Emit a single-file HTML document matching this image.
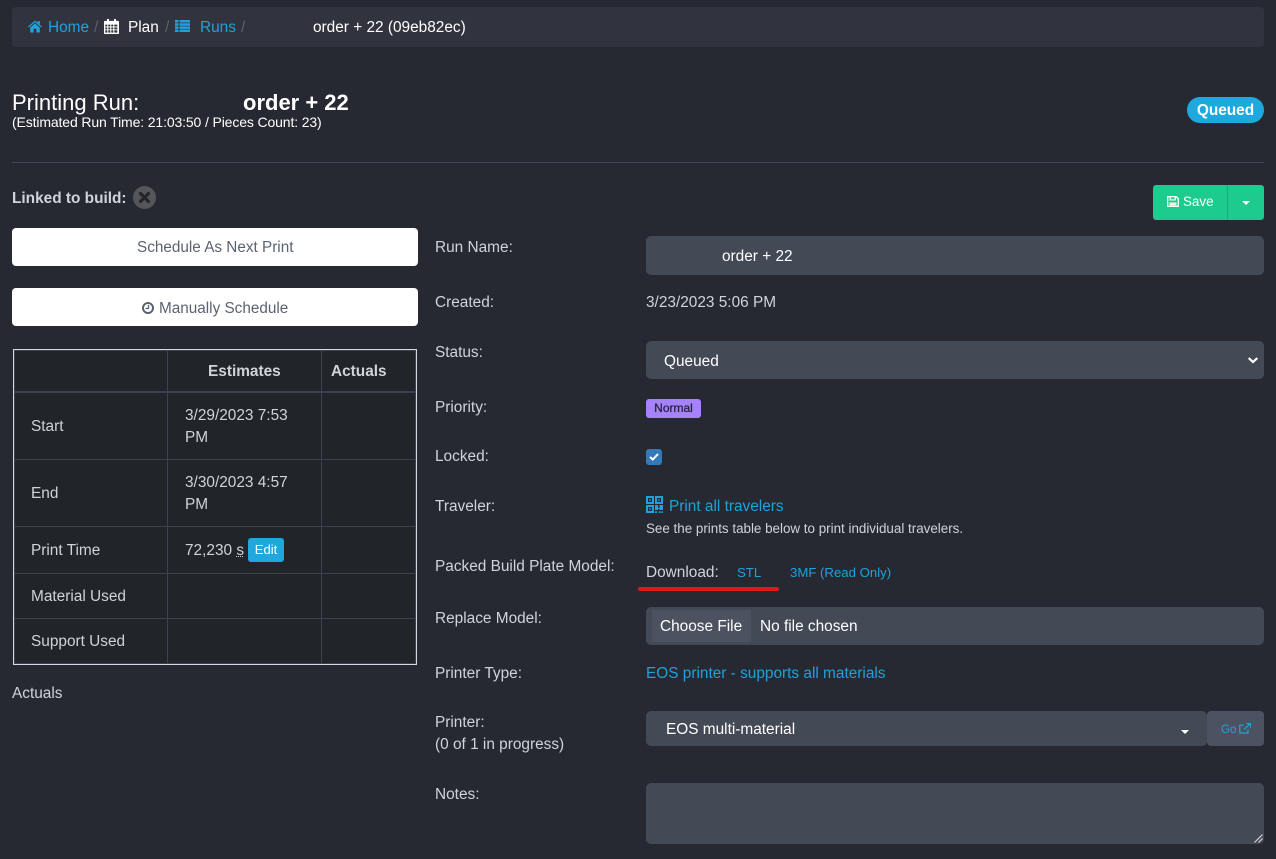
<!DOCTYPE html>
<html><head><meta charset="utf-8"><style>
html,body{margin:0;padding:0;width:1276px;height:859px;overflow:hidden;background:#262932}
body{font-family:"Liberation Sans",sans-serif;font-size:15.4px;color:#ced4da;position:relative}
.a{position:absolute;white-space:nowrap;line-height:20px}
.b{position:absolute;box-sizing:border-box;border-radius:4px}
.l{color:#1fa2dc}.w{color:#fff}
.inp{background:#444956;border-radius:5px}
.btn{background:#fff;border-radius:4px;left:12px;width:406px;height:38px}
.g{position:absolute;background:#3e424e}
.s{color:#5b6270}
svg{display:block}
</style></head><body>
<div class="b" style="left:12px;top:7px;width:1252px;height:40px;background:#31343e"></div>
<svg class="a" style="left:28px;top:20px" width="14" height="13" viewBox="0 0 14 13"><path fill="#1fa2dc" d="M7 .5 0 6.600l.8.900L7 2.200l6.200 5.300.8-.9-2.200-1.900V1h-2v1.900zM2.200 7.600V12.500h3.400V8.800h2.800v3.700h3.400V7.600L7 3.500z"/></svg>
<div class="a l" style="left:48px;top:18px">Home</div>
<div class="a" style="left:94px;top:18px;color:#5d616c">/</div>
<svg class="a" style="left:104px;top:19px" width="15" height="15" viewBox="0 0 15 16" preserveAspectRatio="none"><path fill="#fff" fill-rule="evenodd" d="M1 2h2V0h2v2h5V0h2v2h2a1 1 0 0 1 1 1v12a1 1 0 0 1-1 1H1a1 1 0 0 1-1-1V3a1 1 0 0 1 1-1zM1.300 6v2h2V6zm3 0v2h2V6zm3 0v2h2V6zm3 0v2h3V6zM1.300 9v2h2V9zm3 0v2h2V9zm3 0v2h2V9zm3 0v2h3V9zM1.300 12v2.500h2V12zm3 0v2.500h2V12zm3 0v2.500h2V12zm3 0v2.500h3V12z"/></svg>
<div class="a w" style="left:128px;top:18px">Plan</div>
<div class="a" style="left:165px;top:18px;color:#5d616c">/</div>
<svg class="a" style="left:175px;top:20px" width="15" height="12" viewBox="0 0 15 12"><path fill="#1fa2dc" d="M0 0h3.500v2.500H0zm4.500 0H15v2.500H4.500zM0 3.200h3.500v2.500H0zm4.500 0H15v2.500H4.500zM0 6.400h3.500v2.500H0zm4.500 0H15v2.500H4.500zM0 9.500h3.500V12H0zm4.500 0H15V12H4.500z"/></svg>
<div class="a l" style="left:200px;top:18px">Runs</div>
<div class="a" style="left:241px;top:18px;color:#5d616c">/</div>
<div class="a w" style="left:313px;top:18px">order + 22 (09eb82ec)</div>

<div class="a w" style="left:12px;top:92px;font-size:22px;line-height:22px">Printing Run:</div>
<div class="a w" style="left:243px;top:92px;font-size:22px;line-height:22px;font-weight:bold">order + 22</div>
<div class="a w" style="left:12px;top:112px;font-size:14px;letter-spacing:-.13px">(Estimated Run Time: 21:03:50 / Pieces Count: 23)</div>
<div class="b" style="left:1187px;top:97px;width:77px;height:26px;background:#1fa8de;border-radius:13px;color:#fff;font-weight:bold;text-align:center;line-height:28px">Queued</div>
<div class="b" style="left:12px;top:162px;width:1252px;height:1px;background:#444754;border-radius:0"></div>

<div class="a" style="left:12px;top:189px;font-weight:bold">Linked to build:</div>
<div class="b" style="left:133px;top:186px;width:23px;height:23px;border-radius:50%;background:#545659"></div>
<svg class="a" style="left:138px;top:191px" width="13" height="13" viewBox="0 0 13 13"><path stroke="#23252b" stroke-width="3.200" stroke-linecap="round" d="M2.500 2.500l8 8m0-8l-8 8"/></svg>

<div class="b" style="left:1153px;top:185px;width:74px;height:35px;background:#1dcb8e;border-radius:3px 0 0 3px"></div>
<div class="b" style="left:1227px;top:185px;width:37px;height:35px;background:#1dcb8e;border-left:1px solid #19ac79;border-radius:0 3px 3px 0"></div>
<svg class="a" style="left:1167px;top:196px" width="12" height="11" viewBox="0 0 12 12" preserveAspectRatio="none"><path fill="none" stroke="#fff" stroke-width="1.300" d="M.7.700h8.500l2.100 2.100v8.500H.7zM3.200 1v3.300h5V1"/><path fill="#e9f7d0" d="M2.500 7h7v3.800h-7z"/></svg>
<div class="a w" style="left:1183px;top:192px;font-size:13.400px">Save</div>
<div class="b" style="left:1242px;top:201px;width:0;height:0;border-radius:0;border-left:4px solid transparent;border-right:4px solid transparent;border-top:4px solid #fff"></div>

<div class="b btn" style="top:228px"></div>
<div class="a s" style="left:137px;top:238px;font-size:15.300px">Schedule As Next Print</div>
<div class="b btn" style="top:288px"></div>
<div class="a s" style="left:159px;top:299px;font-size:15.300px">Manually Schedule</div>
<svg class="a" style="left:142px;top:302px" width="12" height="12" viewBox="0 0 12 12"><circle cx="6" cy="6" r="5" fill="none" stroke="#5b6270" stroke-width="2"/><path fill="none" stroke="#5b6270" stroke-width="1.300" d="M6.500 3v3.500H3.500"/></svg>

<div class="b" style="left:13px;top:349px;width:404px;height:316px;background:#212429;border:1px solid #d5d8dc;border-radius:0"></div>
<div class="g" style="left:14px;top:350px;width:402px;height:1px"></div>
<div class="g" style="left:14px;top:663px;width:402px;height:1px"></div>
<div class="g" style="left:14px;top:350px;width:1px;height:314px"></div>
<div class="g" style="left:415px;top:350px;width:1px;height:314px"></div>
<div class="g" style="left:167px;top:350px;width:1px;height:314px"></div>
<div class="g" style="left:321px;top:350px;width:1px;height:314px"></div>
<div class="g" style="left:14px;top:391px;width:402px;height:2px"></div>
<div class="g" style="left:14px;top:459px;width:402px;height:1px"></div>
<div class="g" style="left:14px;top:526px;width:402px;height:1px"></div>
<div class="g" style="left:14px;top:573px;width:402px;height:1px"></div>
<div class="g" style="left:14px;top:618px;width:402px;height:1px"></div>
<div class="a" style="left:208px;top:362px;font-weight:bold">Estimates</div>
<div class="a" style="left:331px;top:362px;font-weight:bold">Actuals</div>
<div class="a" style="left:31px;top:417px">Start</div>
<div class="a" style="left:185px;top:406px">3/29/2023 7:53</div>
<div class="a" style="left:185px;top:428px">PM</div>
<div class="a" style="left:31px;top:484px">End</div>
<div class="a" style="left:185px;top:473px">3/30/2023 4:57</div>
<div class="a" style="left:185px;top:495px">PM</div>
<div class="a" style="left:31px;top:541px">Print Time</div>
<div class="a" style="left:185px;top:541px">72,230 <span style="text-decoration:underline dotted 1px">s</span></div>
<div class="a" style="left:31px;top:587px">Material Used</div>
<div class="a" style="left:31px;top:632px">Support Used</div>
<div class="b" style="left:248px;top:538px;width:36px;height:24px;background:#1fa8de;color:#fff;font-size:13px;text-align:center;line-height:24px;border-radius:3px">Edit</div>
<div class="a" style="left:12px;top:684px">Actuals</div>

<div class="a" style="left:435px;top:238px">Run Name:</div>
<div class="a" style="left:435px;top:293px">Created:</div>
<div class="a" style="left:435px;top:343px">Status:</div>
<div class="a" style="left:435px;top:398px">Priority:</div>
<div class="a" style="left:435px;top:447px">Locked:</div>
<div class="a" style="left:435px;top:497px">Traveler:</div>
<div class="a" style="left:435px;top:557px">Packed Build Plate Model:</div>
<div class="a" style="left:435px;top:609px">Replace Model:</div>
<div class="a" style="left:435px;top:664px">Printer Type:</div>
<div class="a" style="left:435px;top:713px">Printer:</div>
<div class="a" style="left:435px;top:735px">(0 of 1 in progress)</div>
<div class="a" style="left:435px;top:785px">Notes:</div>

<div class="b inp" style="left:646px;top:236px;width:618px;height:39px"></div>
<div class="a w" style="left:722px;top:247px">order + 22</div>
<div class="a" style="left:646px;top:293px">3/23/2023 5:06 PM</div>
<div class="b inp" style="left:646px;top:341px;width:618px;height:38px"></div>
<div class="a w" style="left:664px;top:352px">Queued</div>
<svg class="a" style="left:1248px;top:357px" width="10" height="7" viewBox="0 0 10 7"><path fill="none" stroke="#fff" stroke-width="2.200" d="M.7 1l4.300 4 4.300-4"/></svg>

<div class="b" style="left:646px;top:399px;width:55px;height:19px;background:#a683fb;border-radius:3px;color:#2b2340;font-size:12px;text-align:center;line-height:18px;-webkit-text-stroke:.3px #2b2340">Normal</div>
<div class="b" style="left:646px;top:449px;width:16px;height:16px;background:#337ab7;border-radius:3px"></div>
<svg class="a" style="left:649px;top:453px" width="10" height="8" viewBox="0 0 10 8"><path fill="none" stroke="#fff" stroke-width="2" d="M1 4l2.800 2.500L9 1"/></svg>

<svg class="a" style="left:646px;top:496px" width="17" height="17" viewBox="0 0 17 17"><path fill="#1fa2dc" fill-rule="evenodd" d="M0 0h8v8H0zm2 2v4h4V2zM9 0h8v8H9zm2 2v4h4V2zM3.200 3.200h1.600v1.600H3.200zm9 0h1.600v1.600h-1.600zM0 9h8v8H0zm2 2v4h4v-4zM3.200 12.200h1.600v1.600H3.200zM9 9h3v3h1.500V9H17v5h-3.500v-1H12v1H9zM9 15.300h2V17H9zM12.800 15.300h1.700V17h-1.700zM15.500 15.300H17V17h-1.500z"/></svg>
<div class="a l" style="left:669px;top:497px">Print all travelers</div>
<div class="a" style="left:646px;top:519px;font-size:13.400px">See the prints table below to print individual travelers.</div>

<div class="a" style="left:646px;top:563px">Download:</div>
<div class="a l" style="left:737px;top:563px;font-size:13.200px">STL</div>
<div class="a l" style="left:790px;top:563px;font-size:13.200px">3MF (Read Only)</div>
<div class="b" style="left:638px;top:587px;width:141px;height:4px;background:#e3181f;border-radius:2px"></div>

<div class="b inp" style="left:646px;top:607px;width:618px;height:38px"></div>
<div class="b" style="left:652px;top:610px;width:99px;height:32px;background:#4d5261;border-radius:0"></div>
<div class="a w" style="left:660px;top:617px">Choose File</div>
<div class="a w" style="left:760px;top:617px">No file chosen</div>

<div class="a l" style="left:646px;top:664px">EOS printer - supports all materials</div>

<div class="b inp" style="left:646px;top:711px;width:561px;height:35px"></div>
<div class="a w" style="left:666px;top:720px">EOS multi-material</div>
<div class="b" style="left:1181px;top:730px;width:0;height:0;border-radius:0;border-left:4px solid transparent;border-right:4px solid transparent;border-top:4px solid #fff"></div>
<div class="b" style="left:1207px;top:711px;width:57px;height:35px;background:#4d5263"></div>
<div class="a l" style="left:1221px;top:720px;font-size:11.500px">Go</div>
<svg class="a" style="left:1239px;top:723px" width="12" height="11" viewBox="0 0 12 11"><path fill="none" stroke="#1fa2dc" stroke-width="1.200" d="M9 6.500V10H.8V2.200h4M5 6.500 11 .8M7.500.6h4v4"/></svg>

<div class="b inp" style="left:646px;top:783px;width:618px;height:61px"></div>
<svg class="a" style="left:1254px;top:834px" width="9" height="9" viewBox="0 0 9 9"><path stroke="#e4e4e4" stroke-width="1" d="M.5 8.500 8.500.5M4.500 8.500 8.500 4.500"/></svg>
</body></html>
